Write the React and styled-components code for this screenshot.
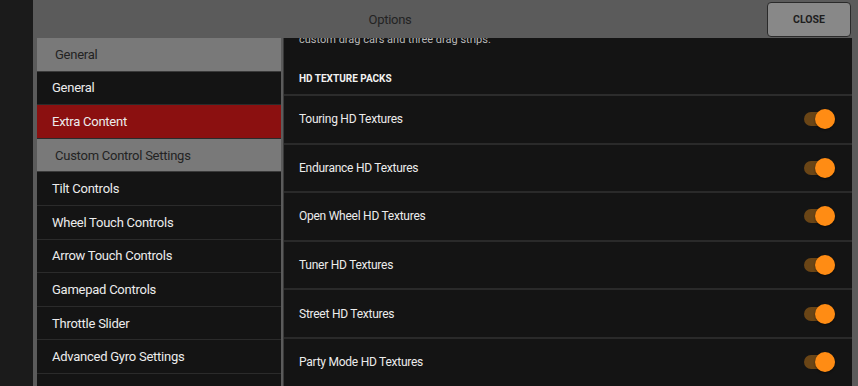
import React from "react";
import styled, { createGlobalStyle } from "styled-components";

const sideMenu = [
  { label: "General", kind: "section" },
  { label: "General" },
  { label: "Extra Content", active: true },
  { label: "Custom Control Settings", kind: "section" },
  { label: "Tilt Controls" },
  { label: "Wheel Touch Controls" },
  { label: "Arrow Touch Controls" },
  { label: "Gamepad Controls" },
  { label: "Throttle Slider" },
  { label: "Advanced Gyro Settings" },
  { label: "" },
];

const texturePacks = [
  "Touring HD Textures",
  "Endurance HD Textures",
  "Open Wheel HD Textures",
  "Tuner HD Textures",
  "Street HD Textures",
  "Party Mode HD Textures",
];

const App = () => {
  return (
    <>
      <GlobalStyle />
      <Screen>
        <EdgeStrip />
        <Modal>
          <ModalHeader>
            <Title>Options</Title>
            <CloseButton>CLOSE</CloseButton>
          </ModalHeader>
          <ModalBody>
            <SideMenu>
              {sideMenu.map((item, i) =>
                item.kind === "section" ? (
                  <SectionRow key={i}>{item.label}</SectionRow>
                ) : (
                  <MenuRow key={i} $active={item.active}>
                    {item.label}
                  </MenuRow>
                )
              )}
            </SideMenu>
            <Divider />
            <ContentPanel>
              <ScrollArea>
                <Description>
                  custom drag cars and three drag strips.
                </Description>
                <GroupTitle>HD TEXTURE PACKS</GroupTitle>
                {texturePacks.map((name) => (
                  <OptionRow key={name}>
                    <span>{name}</span>
                    <Toggle $on>
                      <Thumb />
                    </Toggle>
                  </OptionRow>
                ))}
              </ScrollArea>
            </ContentPanel>
          </ModalBody>
        </Modal>
      </Screen>
    </>
  );
};

//styled components
const GlobalStyle = createGlobalStyle`
  html, body {
    margin: 0;
    padding: 0;
    background: #1b1b1b;
    font-family: Roboto, "Liberation Sans", sans-serif;
  }
  * {
    box-sizing: border-box;
  }
`;

const Screen = styled.div`
  display: flex;
  width: 858px;
  height: 386px;
  overflow: hidden;
`;

const EdgeStrip = styled.div`
  width: 33px;
  background: #1b1b1b;
`;

const Modal = styled.div`
  flex: 1;
  display: flex;
  flex-direction: column;
  background: #5b5b5b;
  min-width: 0;
`;

const ModalHeader = styled.div`
  display: flex;
  align-items: flex-start;
  height: 38px;
  padding: 2px 7px 0 0;
`;

const Title = styled.div`
  flex: 1;
  text-align: center;
  padding-right: 20px;
  font-size: 13px;
  letter-spacing: -0.3px;
  line-height: 36px;
  color: #232323;
`;

const CloseButton = styled.div`
  width: 84px;
  height: 35px;
  display: flex;
  align-items: center;
  justify-content: center;
  background: #888888;
  border: 1.5px solid #2a2a2a;
  border-radius: 4px;
  font-size: 10.5px;
  font-weight: 700;
  color: #1e1e1e;
`;

const ModalBody = styled.div`
  flex: 1;
  display: flex;
  padding-left: 4px;
  padding-right: 6px;
  min-height: 0;
`;

const SideMenu = styled.div`
  width: 244px;
  display: flex;
  flex-direction: column;
  background: #141414;
  overflow: hidden;
`;

const SectionRow = styled.div`
  flex: none;
  height: 33.6px;
  display: flex;
  align-items: center;
  padding-left: 18px;
  background: #797979;
  color: #232323;
  font-size: 13px;
  letter-spacing: -0.25px;
  border-bottom: 1px solid #3a3a3a;
`;

const MenuRow = styled.div`
  flex: none;
  height: 33.6px;
  display: flex;
  align-items: center;
  padding-left: 15px;
  background: ${(p) => (p.$active ? "#8b1010" : "#141414")};
  color: #ececec;
  font-size: 13px;
  letter-spacing: -0.25px;
  border-bottom: 1px solid #2b2b2b;
`;

const Divider = styled.div`
  width: 3px;
  border-right: 1px solid #3a3a3a;
`;

const ContentPanel = styled.div`
  flex: 1;
  background: #141414;
  overflow: hidden;
`;

const ScrollArea = styled.div`
  margin-top: -4px;
`;

const Description = styled.div`
  font-size: 11px;
  line-height: 12px;
  color: #b8b8b8;
  padding: 0 15px;
`;

const GroupTitle = styled.div`
  padding: 25px 15px 7px;
  font-size: 10px;
  line-height: 16px;
  font-weight: 700;
  color: #f2f2f2;
  border-bottom: 2px solid #2c2c2c;
`;

const OptionRow = styled.div`
  height: 48.6px;
  display: flex;
  align-items: center;
  justify-content: space-between;
  padding: 0 17px 0 15px;
  border-bottom: 2px solid #2a2a2a;
  color: #ececec;
  font-size: 12px;
  letter-spacing: -0.25px;
`;

const Toggle = styled.div`
  width: 31px;
  height: 14px;
  border-radius: 7px;
  background: ${(p) => (p.$on ? "#6a4516" : "#555")};
  display: flex;
  align-items: center;
  justify-content: ${(p) => (p.$on ? "flex-end" : "flex-start")};
`;

const Thumb = styled.div`
  width: 20px;
  height: 20px;
  border-radius: 50%;
  background: #ff8c14;
  box-shadow: 0 1px 2px rgba(0, 0, 0, 0.5);
`;

export default App;
